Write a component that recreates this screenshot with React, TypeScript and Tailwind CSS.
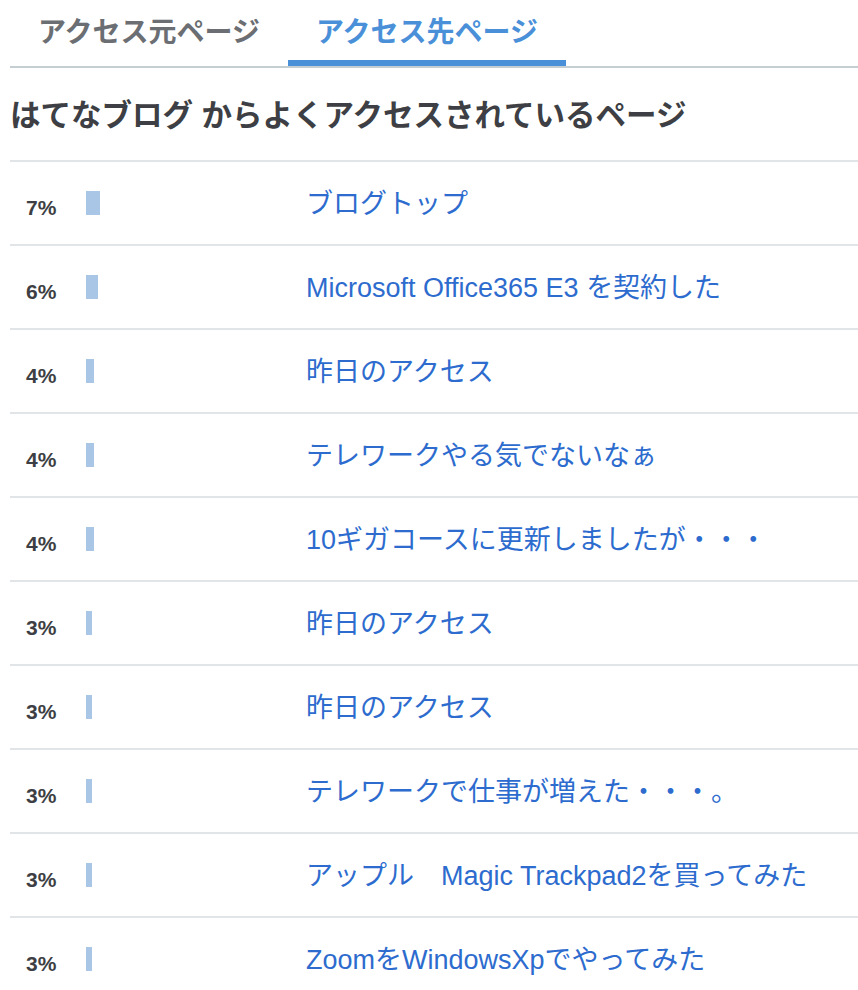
import React from 'react';

const rows = [
  { pct: 7, title: 'ブログトップ' },
  { pct: 6, title: 'Microsoft Office365 E3 を契約した' },
  { pct: 4, title: '昨日のアクセス' },
  { pct: 4, title: 'テレワークやる気でないなぁ' },
  { pct: 4, title: '10ギガコースに更新しましたが・・・' },
  { pct: 3, title: '昨日のアクセス' },
  { pct: 3, title: '昨日のアクセス' },
  { pct: 3, title: 'テレワークで仕事が増えた・・・。' },
  { pct: 3, title: 'アップル　Magic Trackpad2を買ってみた' },
  { pct: 3, title: 'ZoomをWindowsXpでやってみた' },
];

const App = () => {
  return (
    <div
      className="w-[858px] h-[990px] overflow-hidden bg-white pl-[10px]"
      style={{ fontFamily: '"Liberation Sans", "Noto Sans CJK JP", sans-serif' }}
    >
      {/* Tabs */}
      <div className="flex border-b-2 border-[#c5ced3]">
        <div className="w-[278px] h-[66px] flex items-center justify-center text-[28px] font-bold text-[#6b6e72]">
          アクセス元ページ
        </div>
        <div className="relative w-[278px] h-[66px] flex items-center justify-center text-[28px] font-bold text-[#4a90d9]">
          アクセス先ページ
          <span className="absolute left-0 right-0 bottom-0 h-[6px] bg-[#4a90d9]" />
        </div>
      </div>

      {/* Heading */}
      <h2 className="h-[94px] flex items-center pt-[4px] text-[30.5px] font-bold text-[#3d3f44] border-b-2 border-[#e1e5e8]">
        はてなブログ からよくアクセスされているページ
      </h2>

      {/* Rows */}
      <ul>
        {rows.map((r, i) => (
          <li key={i} className="h-[84px] flex items-center border-b-2 border-[#e1e5e8]">
            <span className="w-[76px] pl-[16px] pt-[10px] text-[21px] font-bold text-[#3d3f44]">{r.pct}%</span>
            <span className="w-[220px] flex">
              <span className="h-[24px] bg-[#aac6e6]" style={{ width: r.pct * 2 }} />
            </span>
            <a className="pt-[2px] text-[27px] text-[#2d6cce] whitespace-nowrap">{r.title}</a>
          </li>
        ))}
      </ul>
    </div>
  );
};

export default App;
